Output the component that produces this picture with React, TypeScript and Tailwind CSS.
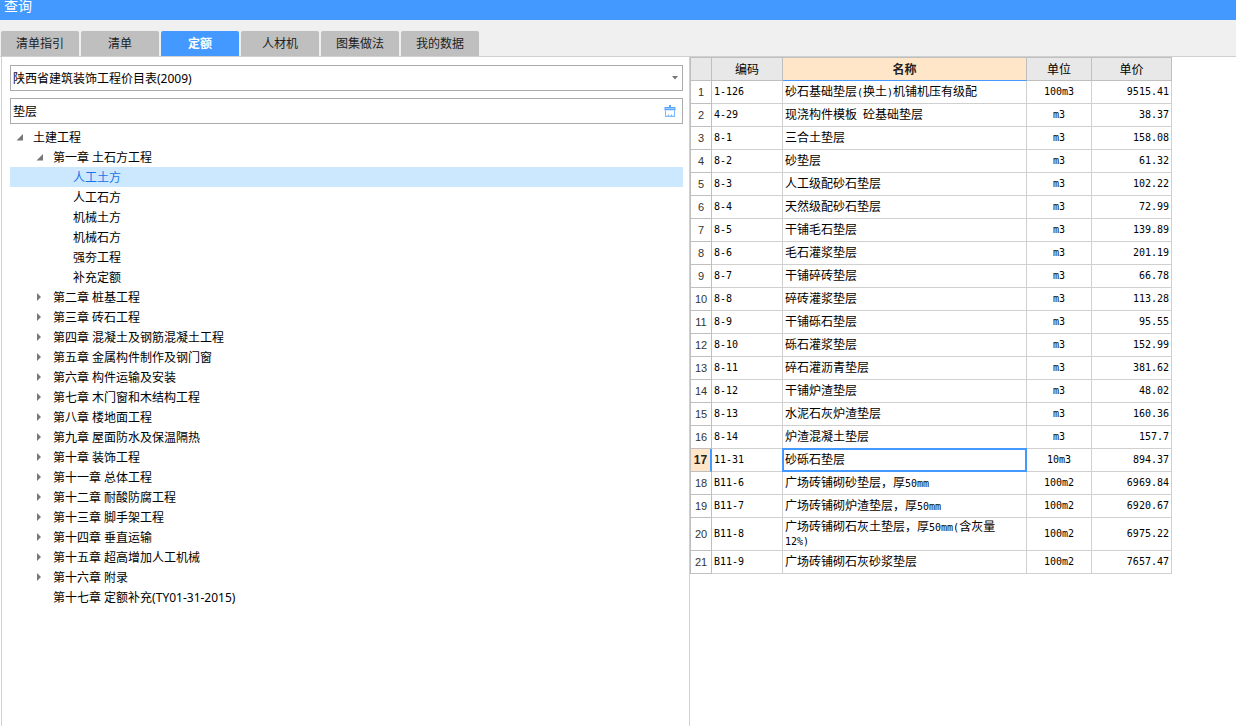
import { useState } from "react";

const tabs = ["清单指引", "清单", "定额", "人材机", "图集做法", "我的数据"];

type TreeNode = { label: string; level: 0 | 1 | 2; state: "open" | "closed" | "leaf" };

const tree: TreeNode[] = [
  { label: "土建工程", level: 0, state: "open" },
  { label: "第一章 土石方工程", level: 1, state: "open" },
  { label: "人工土方", level: 2, state: "leaf" },
  { label: "人工石方", level: 2, state: "leaf" },
  { label: "机械土方", level: 2, state: "leaf" },
  { label: "机械石方", level: 2, state: "leaf" },
  { label: "强夯工程", level: 2, state: "leaf" },
  { label: "补充定额", level: 2, state: "leaf" },
  { label: "第二章 桩基工程", level: 1, state: "closed" },
  { label: "第三章 砖石工程", level: 1, state: "closed" },
  { label: "第四章 混凝土及钢筋混凝土工程", level: 1, state: "closed" },
  { label: "第五章 金属构件制作及钢门窗", level: 1, state: "closed" },
  { label: "第六章 构件运输及安装", level: 1, state: "closed" },
  { label: "第七章 木门窗和木结构工程", level: 1, state: "closed" },
  { label: "第八章 楼地面工程", level: 1, state: "closed" },
  { label: "第九章 屋面防水及保温隔热", level: 1, state: "closed" },
  { label: "第十章 装饰工程", level: 1, state: "closed" },
  { label: "第十一章 总体工程", level: 1, state: "closed" },
  { label: "第十二章 耐酸防腐工程", level: 1, state: "closed" },
  { label: "第十三章 脚手架工程", level: 1, state: "closed" },
  { label: "第十四章 垂直运输", level: 1, state: "closed" },
  { label: "第十五章 超高增加人工机械", level: 1, state: "closed" },
  { label: "第十六章 附录", level: 1, state: "closed" },
  { label: "第十七章 定额补充(TY01-31-2015)", level: 1, state: "leaf" },
];

const rows: [string, string, string, string][] = [
  ["1-126", "砂石基础垫层(换土)机铺机压有级配", "100m3", "9515.41"],
  ["4-29", "现浇构件模板 砼基础垫层", "m3", "38.37"],
  ["8-1", "三合土垫层", "m3", "158.08"],
  ["8-2", "砂垫层", "m3", "61.32"],
  ["8-3", "人工级配砂石垫层", "m3", "102.22"],
  ["8-4", "天然级配砂石垫层", "m3", "72.99"],
  ["8-5", "干铺毛石垫层", "m3", "139.89"],
  ["8-6", "毛石灌浆垫层", "m3", "201.19"],
  ["8-7", "干铺碎砖垫层", "m3", "66.78"],
  ["8-8", "碎砖灌浆垫层", "m3", "113.28"],
  ["8-9", "干铺砾石垫层", "m3", "95.55"],
  ["8-10", "砾石灌浆垫层", "m3", "152.99"],
  ["8-11", "碎石灌沥青垫层", "m3", "381.62"],
  ["8-12", "干铺炉渣垫层", "m3", "48.02"],
  ["8-13", "水泥石灰炉渣垫层", "m3", "160.36"],
  ["8-14", "炉渣混凝土垫层", "m3", "157.7"],
  ["11-31", "砂砾石垫层", "10m3", "894.37"],
  ["B11-6", "广场砖铺砌砂垫层，厚50mm", "100m2", "6969.84"],
  ["B11-7", "广场砖铺砌炉渣垫层，厚50mm", "100m2", "6920.67"],
  ["B11-8", "广场砖铺砌石灰土垫层，厚50mm(含灰量12%)", "100m2", "6975.22"],
  ["B11-9", "广场砖铺砌石灰砂浆垫层", "100m2", "7657.47"],
];

const indent = { 0: "pl-[6px]", 1: "pl-[26px]", 2: "pl-[46px]" };

function Expander({ state }: { state: TreeNode["state"] }) {
  return (
    <svg className="h-[10px] w-[10px] shrink-0" viewBox="0 0 10 10" fill="#777" aria-hidden="true">
      {state === "open" && <path d="M7 2v6.500H.5z" />}
      {state === "closed" && <path d="M1 1l4 4-4 4z" />}
    </svg>
  );
}

/* Half-width characters take exactly half of a Chinese character. */
function MixedText({ text }: { text: string }) {
  return (
    <>
      {text.split(/([\x20-\x7e]+)/).map((part, i) =>
        i % 2 === 1 ? (
          <span key={i} className="font-['DejaVu_Sans_Mono',monospace] text-[10px] leading-none">{part}</span>
        ) : (
          part
        ),
      )}
    </>
  );
}

export default function App() {
  const [tab, setTab] = useState("定额");
  const [node, setNode] = useState("人工土方");
  const [keyword, setKeyword] = useState("垫层");
  const [selected, setSelected] = useState(16);

  const head = "border-r border-b border-t border-[#bfbfbf] p-0 text-center font-normal";
  const cell = "border-r border-b border-[#d0d0d0]";
  const mono = "font-['DejaVu_Sans_Mono',monospace] text-[10px]";

  return (
    <div className="flex min-h-screen flex-col bg-white font-['Noto_Sans','Noto_Sans_CJK_SC',sans-serif] text-[12px] text-black">
      <header className="h-5 bg-[#4399ff] px-1">
        <h1 className="text-[14px] leading-3 text-white">查询</h1>
      </header>

      <nav className="flex gap-[2px] border-b border-[#d0d0d0] bg-[#f0f0f0] pt-[11px] pl-px" role="tablist">
        {tabs.map((t) => (
          <button
            key={t}
            type="button"
            role="tab"
            aria-selected={t === tab}
            onClick={() => setTab(t)}
            className={
              t === tab
                ? "h-[25px] w-[78px] rounded-t-[2px] bg-[#4399ff] pt-px font-bold text-white"
                : "h-[25px] w-[78px] rounded-t-[2px] bg-[#bfbfbf] pt-px text-[#222]"
            }
          >
            {t}
          </button>
        ))}
      </nav>

      <main className="grid flex-1 grid-cols-[minmax(0,689fr)_minmax(0,547fr)]">
        <section className="ml-px border-l border-[#d0d0d0] pt-2 pr-[6px] pl-2">
          <div className="relative">
            <select
              aria-label="定额库"
              className="block h-[26px] w-full appearance-none border border-[#ababab] bg-white px-[2px] pt-[2px] outline-none"
            >
              <option>陕西省建筑装饰工程价目表(2009)</option>
            </select>
            <svg
              className="pointer-events-none absolute top-[11px] right-[5px] h-[4px] w-[6px]"
              viewBox="0 0 6 4"
              fill="#777"
              aria-hidden="true"
            >
              <path d="M0 0h6L3 3.5z" />
            </svg>
          </div>

          <div className="mt-[7px] flex h-[26px] items-center border border-[#ababab] pr-[6px]">
            <input
              aria-label="关键字"
              value={keyword}
              onChange={(e) => setKeyword(e.target.value)}
              className="min-w-0 flex-1 px-[2px] pt-[2px] outline-none"
            />
            <button type="button" aria-label="清除" onClick={() => setKeyword("")}>
              <svg className="block h-3 w-3" viewBox="0 0 12 12" aria-hidden="true">
                <path d="M5 0h2v2h4.500v3.500H.5V2H5z" fill="#5aa5ff" />
                <path d="M1.500 5.500v5.800h9V5.500" fill="#fff" stroke="#7ab8ff" />
                <path d="M1 11.300h10M4.500 11.300V9.500M7.500 11.300V9.500" fill="none" stroke="#7ab8ff" />
                <path d="M1.500 3.500h9" stroke="#9bcaff" />
              </svg>
            </button>
          </div>

          <ul className="mt-[3px]" role="tree">
            {tree.map((n) => (
              <li key={n.label} role="treeitem" aria-selected={n.label === node}>
                <button
                  type="button"
                  onClick={() => setNode(n.label)}
                  className={`flex h-5 w-full items-center gap-[7px] text-left ${indent[n.level]} ${
                    n.label === node ? "bg-[#cce8ff] text-[#1a73e8]" : ""
                  }`}
                >
                  <Expander state={n.state} />
                  <span className="pt-[2px]">{n.label}</span>
                </button>
              </li>
            ))}
          </ul>
        </section>

        <section className="border-l border-[#d0d0d0]">
          <table className="w-[482px] table-fixed border-separate border-spacing-0 border-l border-[#bfbfbf] font-['Noto_Sans_CJK_SC',sans-serif]">
            <colgroup>
              <col className="w-[21px]" />
              <col className="w-[71px]" />
              <col className="w-[244px]" />
              <col className="w-[65px]" />
              <col className="w-[80px]" />
            </colgroup>
            <thead>
              <tr className="h-6 bg-[#e8e8e8] leading-4">
                <td className={head} />
                <th className={head}>编码</th>
                <th className="border-t border-r border-b border-[#bfbfbf] border-b-[#4399ff] bg-[#ffe6c8] p-0 text-center font-bold text-[#222]">
                  名称
                </th>
                <th className={head}>单位</th>
                <th className={head}>单价</th>
              </tr>
            </thead>
            <tbody>
              {rows.map(([code, name, unit, price], i) => {
                const on = i === selected;
                return (
                  <tr key={code} className="h-[23px] leading-[14px]" onClick={() => setSelected(i)}>
                    <th
                      className={
                        on
                          ? "border-r-2 border-b border-r-[#4399ff] border-b-[#bfbfbf] bg-[#ffe6c8] p-0 text-center font-['Liberation_Sans',sans-serif] text-[12px] font-bold text-[#222]"
                          : "border-r border-b border-[#bfbfbf] p-0 text-center font-['Liberation_Sans',sans-serif] text-[11px] font-normal text-[#333]"
                      }
                    >
                      {i + 1}
                    </th>
                    <td className={`${cell} ${mono} px-[2px] py-0`}>{code}</td>
                    <td className={`${cell} relative pt-px pr-3 pb-[3px] pl-[2px]`}>
                      <MixedText text={name} />
                      {on && <span className="pointer-events-none absolute -inset-px border-2 border-[#4399ff]" />}
                    </td>
                    <td className={`${cell} ${mono} p-0 text-center`}>{unit}</td>
                    <td className={`${cell} ${mono} py-0 pr-[2px] pl-0 text-right`}>{price}</td>
                  </tr>
                );
              })}
            </tbody>
          </table>
        </section>
      </main>
    </div>
  );
}
